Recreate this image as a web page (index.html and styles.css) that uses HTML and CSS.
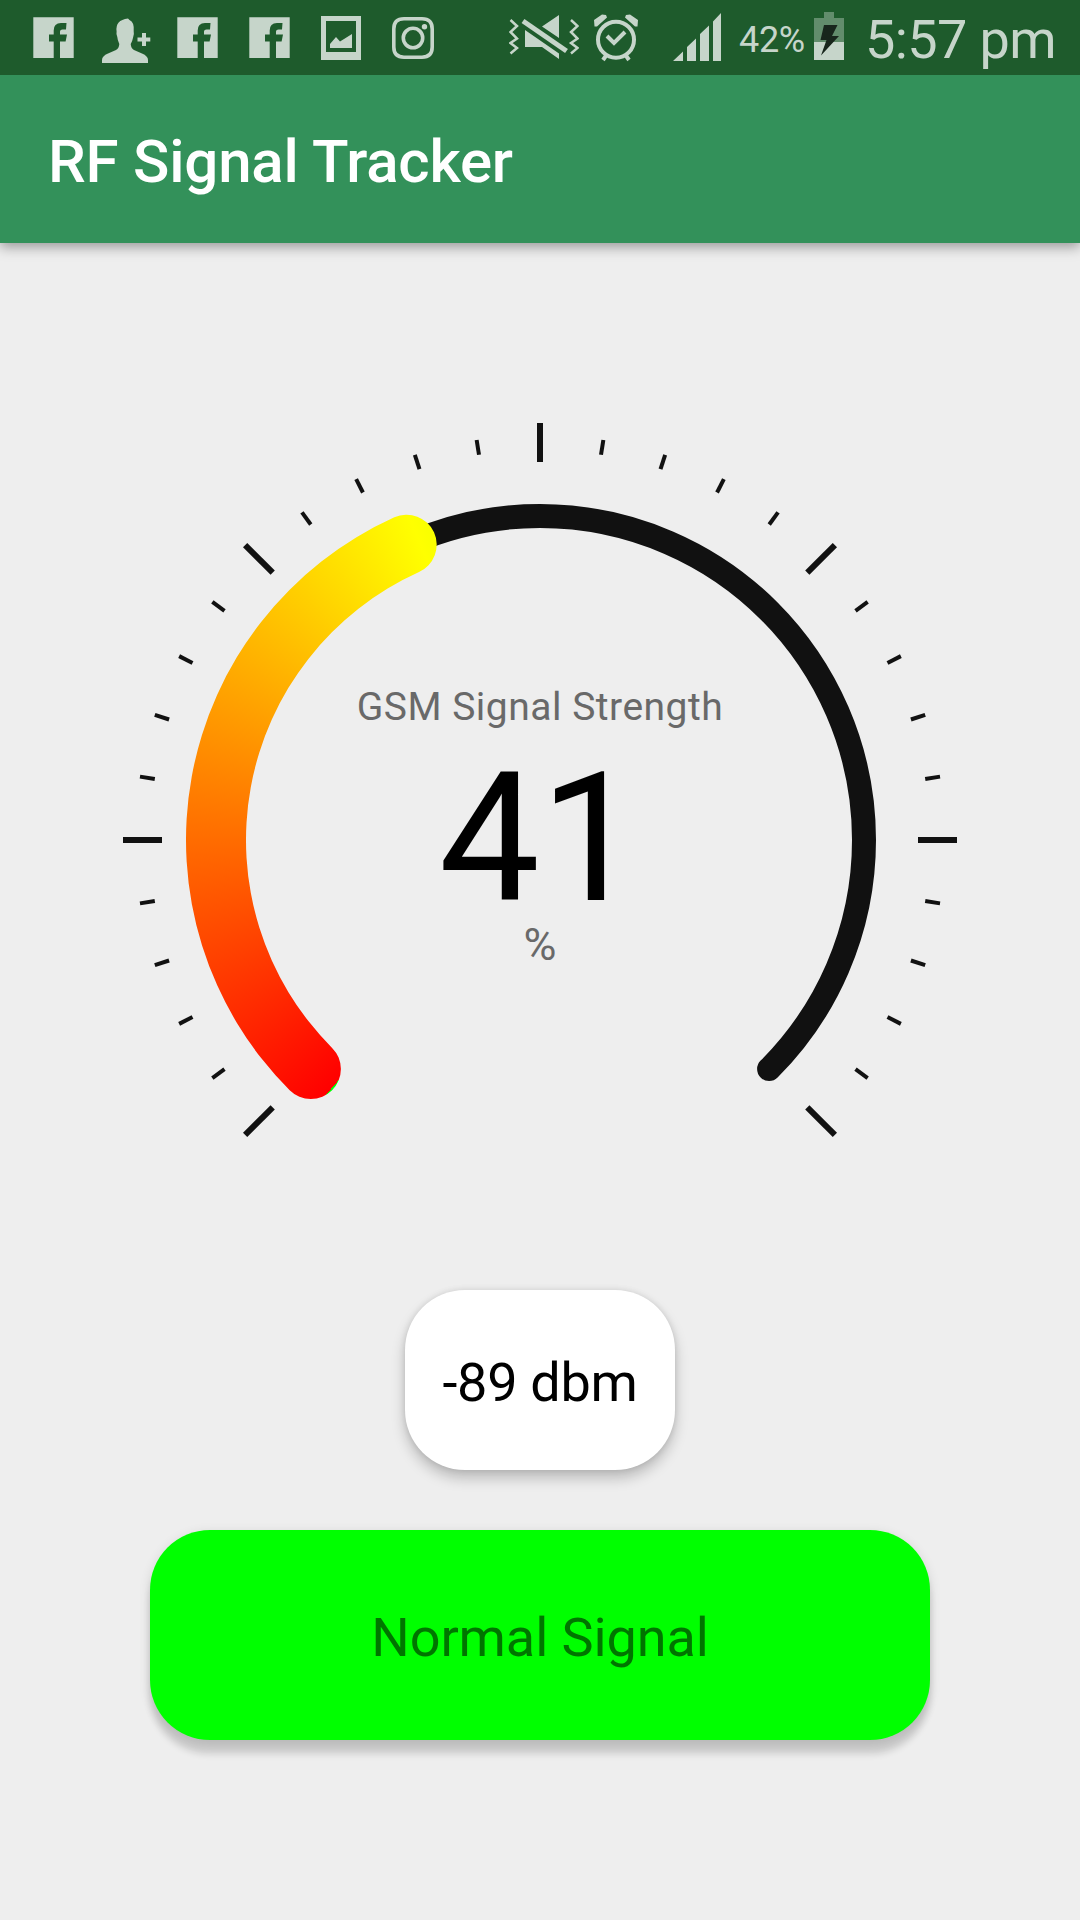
FILE: index.html
```html
<!DOCTYPE html>
<html lang="en">
<head>
<meta charset="utf-8">
<title>RF Signal Tracker</title>
<link rel="stylesheet" href="styles.css">
</head>
<body>
<div class="status-bar">
  <svg class="icon icon-first" width="41" height="75" viewBox="0 0 41 75"><path id="fb" fill-rule="evenodd" d="M0.300 17.200H40.700V58H27V41.500H32.600L34 34.500H27V31.500Q27 29.500 29.500 29.500H33L33.500 23H28Q20.700 23 20.700 30.500V34.500H16V41.500H20.700V58H0.300Z"/></svg>
  <svg class="icon icon-contact" width="49" height="75" viewBox="102 0 49 75"><path d="M102 63V60Q102 56 108 53.500L116 50Q119 48.500 119.300 44Q117.500 40 117.300 37Q116 34 116.600 31.500Q115 20 128 18.500L129.500 20Q134.500 22 133.700 31.500Q134.300 34 133.200 37Q132.500 41 130.700 44Q131 48.500 134 50L142 53.500Q148 56 148 60V63ZM142 33H146V37.500H150.300V41.500H146V46H142V41.500H137.500V37.500H142Z"/></svg>
  <svg class="icon icon-fb" width="41" height="75" viewBox="0 0 41 75"><use href="#fb"/></svg>
  <svg class="icon icon-fb2" width="41" height="75" viewBox="0 0 41 75"><use href="#fb"/></svg>
  <svg class="icon icon-photo" width="40" height="75" viewBox="321 0 40 75"><path fill-rule="evenodd" d="M321 16H361V60H321ZM326 21V52H356V21ZM330 48V44L336 37L340 41.500L352 34V48Z"/></svg>
  <svg class="icon icon-insta" width="43" height="75" viewBox="392 0 43 75"><g fill="none" stroke="currentColor" stroke-width="3.600"><path d="M404 18.800H422Q432.200 18.800 432.200 29V47Q432.200 57.200 422 57.200H404Q393.800 57.200 393.800 47V29Q393.800 18.800 404 18.800Z"/><circle cx="413" cy="38" r="9.700"/></g><circle cx="424.500" cy="26.700" r="2.700"/></svg>
  <svg class="icon icon-mute" width="70" height="75" viewBox="509 0 70 75"><path d="M542 26.500L559 15V38ZM525 30L559 53.500V59L542 47H525Z"/><path fill="none" stroke="currentColor" stroke-width="5" d="M523 21L566.500 51"/><path fill="none" stroke="currentColor" stroke-width="2.500" d="M510.500 20L517 26L510.500 32L517 38.500L510.500 43L517 48L510.500 53.500M571 20L577.500 26L571 32L577.500 38.500L571 43L577.500 48L571 53.500"/></svg>
  <svg class="icon icon-alarm" width="46" height="75" viewBox="593 0 46 75"><circle cx="616" cy="39.700" r="18" fill="none" stroke="currentColor" stroke-width="4"/><path d="M594.500 26.500L594 20L602 14.500L606 15L607 17.500L597 26.500ZM637.500 26.500L638 20L630 14.500L626 15L625 17.500L635 26.500Z"/><path fill="none" stroke="currentColor" stroke-width="4" d="M606.500 55L603 60M625.500 55L629 60M607 36L614 43L625 32"/></svg>
  <svg class="icon icon-signal" width="48" height="75" viewBox="673 0 48 75"><path d="M673 61L683 51.500V61ZM687 61V47L696 38.500V61ZM700 61V34L709 25.500V61ZM713 61V21.500L721 13V61Z"/></svg>
  <span class="battery-text">42%</span>
  <svg class="icon icon-battery" width="30" height="75" viewBox="814 0 30 75"><path class="battery-empty" d="M824 12H834V18H844V42H814V18H824Z"/><path d="M814 42H844V60H814Z"/><path class="bolt" d="M824 25H837.500L832 36H839L821 55.500L826.500 40H820.500Z"/></svg>
  <span class="clock">5:57 pm</span>
</div>
<header class="app-bar"><h1 class="app-title">RF Signal Tracker</h1></header>
<main class="content">
  <section class="gauge">
    <svg class="dial" width="840" height="840" viewBox="-420 -420 840 840">
      <path class="track" d="M-229.100 229.100A324 324 0 1 1 229.100 229.100"/>
      <g id="ticks"></g>
    </svg>
    <div class="progress"></div>
    <div class="reading">
      <div class="label">GSM Signal Strength</div>
      <div class="value">41</div>
      <div class="unit">%</div>
    </div>
  </section>
  <div class="card">-89 dbm</div>
  <div class="state">Normal Signal</div>
</main>
<script src="gauge.js"></script>
</body>
</html>
```
FILE: gauge.js
```js
// Scale marks every 9 degrees over 270, a long one at each fifth step.
const ticks = document.getElementById('ticks');
for (let i = 0; i <= 30; i++) {
  const major = i % 5 === 0;
  const line = document.createElementNS('http://www.w3.org/2000/svg', 'line');
  line.setAttribute('y1', major ? -417 : -405);
  line.setAttribute('y2', major ? -378 : -390);
  line.setAttribute('class', major ? 'tick major' : 'tick');
  line.setAttribute('transform', `rotate(${-135 + i * 9})`);
  ticks.appendChild(line);
}
```
FILE: styles.css
```css
* { box-sizing: border-box; }
body { margin: 0; width: 1080px; height: 1920px; overflow: hidden; background: #eee; font-family: Roboto, "Noto Sans", sans-serif; color: #000; }
.status-bar { position: relative; z-index: 1; display: flex; height: 75px; background: #1e5b2c; color: #c6d5ca; line-height: 75px; white-space: nowrap; }
.icon { display: block; flex: none; fill: currentColor; }
.icon-first { margin-left: 33px; }
.icon-contact { margin-left: 28px; }
.icon-fb { margin-left: 26px; }
.icon-fb2 { margin-left: 31px; }
.icon-photo { margin-left: 31px; }
.icon-insta { margin-left: 31px; }
.icon-mute { margin-left: 74px; }
.icon-alarm { margin-left: 14px; }
.icon-signal { margin-left: 34px; }
.battery-text { width: 75px; margin-left: 18px; font-size: 36px; padding-top: 3px; letter-spacing: -.3px; }
.battery-empty { fill: #628d6c; }
.bolt { fill: #18261c; }
.clock { margin-left: 21px; font-size: 54px; padding-top: 2px; letter-spacing: -.6px; }
.app-bar { position: relative; display: flex; align-items: center; height: 168px; padding: 6px 0 0 48px; background: #33915a; box-shadow: 0 4px 12px rgba(0,0,0,.36); }
.app-title { margin: 0; font-size: 60px; font-weight: 500; line-height: 70px; letter-spacing: -.2px; color: #fff; }
.content { display: flex; flex-direction: column; align-items: center; padding-top: 177px; }
.gauge { display: grid; width: 840px; height: 840px; }
.gauge > * { grid-area: 1 / 1; }
.track { fill: none; stroke: #111; stroke-width: 24; stroke-linecap: round; }
.tick { stroke: #111; stroke-width: 4; }
.major { stroke-width: 6; }
.progress { background: conic-gradient(from 220deg, #f00 0deg, #ff0 118deg, #0f0 240deg, #0f0 360deg); clip-path: path("M169.68 670.32A354 354 0 0 1 274.33 97.36A30 30 0 0 1 299.02 152.05A294 294 0 0 0 212.11 627.89A30 30 0 0 1 169.68 670.32Z"); }
.reading { display: flex; flex-direction: column; align-items: center; padding-top: 262px; }
.label { font-size: 39px; line-height: 50px; color: #696969; letter-spacing: .5px; }
.value { margin-top: 7px; font-size: 180px; line-height: 200px; }
.unit { margin-top: -19px; font-size: 45px; line-height: 50px; color: #696969; }
.card, .state { display: flex; align-items: center; justify-content: center; border-radius: 60px; font-size: 54px; }
.card { width: 270px; height: 180px; margin-top: 30px; background: #fff; box-shadow: 0 8px 14px rgba(0,0,0,.22), 0 0 6px rgba(0,0,0,.1); padding-top: 4px; letter-spacing: -.3px; }
.state { width: 780px; height: 210px; margin-top: 60px; background: #0f0; color: rgba(0,0,0,.54); box-shadow: 0 14px 7px rgba(0,0,0,.14), 0 3px 12px rgba(0,0,0,.12); padding-top: 4px; letter-spacing: -.1px; }
```
